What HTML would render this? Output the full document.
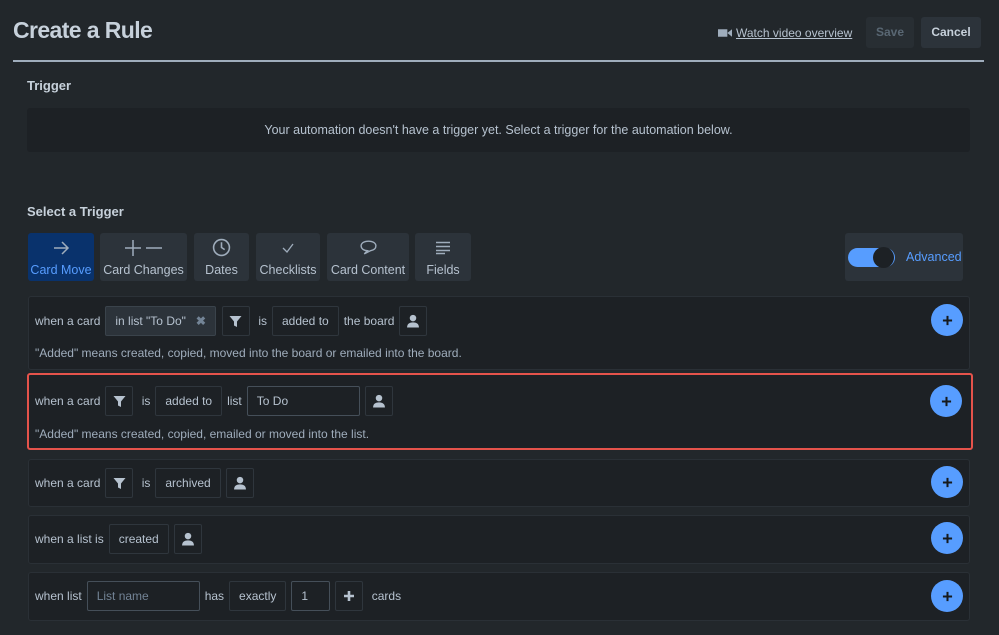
<!DOCTYPE html>
<html><head><meta charset="utf-8"><style>
*{box-sizing:border-box;margin:0;padding:0}
body{width:999px;height:635px;background:#22272b;color:#b6c2cf;font-family:"Liberation Sans",sans-serif;font-size:12px;position:relative;overflow:hidden}
.a{position:absolute}
.title{left:13px;top:17px;font-size:23px;font-weight:bold;color:#c7d1db;letter-spacing:-0.6px}
.hr{left:13px;top:60px;width:971px;height:2px;background:#9fadbc}
.h{font-weight:bold;font-size:13px;color:#c7d1db}
.msg{left:27px;top:108px;width:943px;height:44px;background:#1d2125;border-radius:3px;text-align:center;line-height:44px;color:#b6c2cf;font-size:12.5px}
.tab{top:233px;height:48px;background:#2c333a;border-radius:3px;text-align:center;color:#b6c2cf;font-size:12.5px}
.tab .ic{height:26px;display:flex;align-items:center;justify-content:center;padding-top:3px}
.tab .lb{margin-top:4px}
.card{left:28px;width:942px;background:#1d2125;border-radius:3px;border:1px solid #2a3036}
.row{position:absolute;left:6px;display:flex;align-items:center;gap:5px;height:30px;color:#b6c2cf;white-space:nowrap}
.b{height:30px;border:1px solid #2f363d;border-radius:2px;display:flex;align-items:center;padding:0 9px;background:#1d2125}
.sq{width:28px;justify-content:center;padding:0}
.note{position:absolute;left:6px;color:#9fadbc;font-size:12px}
.plus{position:absolute;right:6px;width:32px;height:32px;border-radius:50%;background:#579dff;display:flex;align-items:center;justify-content:center}
</style></head><body>
<div class="a title">Create a Rule</div>
<div class="a" style="left:718px;top:26px;color:#b6c2cf;font-size:12px;display:flex;align-items:center;gap:4px"><svg width="14" height="10" viewBox="0 0 15 10"><rect x="0" y="1" width="10" height="8" fill="#9fadbc"/><path d="M10 5 L15 1 V9 Z" fill="#9fadbc"/></svg><span style="text-decoration:underline">Watch video overview</span></div>
<div class="a" style="left:866px;top:17px;width:48px;height:31px;background:#282e33;border-radius:3px;color:#596773;font-weight:bold;line-height:31px;text-align:center">Save</div>
<div class="a" style="left:921px;top:17px;width:60px;height:31px;background:#2c333a;border-radius:3px;color:#c7d1db;font-weight:bold;line-height:31px;text-align:center">Cancel</div>
<div class="a hr"></div>
<div class="a h" style="left:27px;top:78px">Trigger</div>
<div class="a msg">Your automation doesn't have a trigger yet. Select a trigger for the automation below.</div>
<div class="a h" style="left:27px;top:204px">Select a Trigger</div>

<div class="a tab" style="left:28px;width:66px;background:#09326c;color:#579dff"><div class="ic"><svg width="18" height="16" viewBox="0 0 18 16"><path d="M2 8H16M10 2L16 8L10 14" stroke="#9fadbc" stroke-width="1.5" fill="none"/></svg></div><div class="lb">Card Move</div></div>
<div class="a tab" style="left:100px;width:87px"><div class="ic"><svg width="40" height="18" viewBox="0 0 40 18"><path d="M1 9H17M9 1V17M22 9H38" stroke="#9fadbc" stroke-width="1.5"/></svg></div><div class="lb">Card Changes</div></div>
<div class="a tab" style="left:194px;width:55px"><div class="ic"><svg width="19" height="19" viewBox="0 0 18 18"><circle cx="9" cy="9" r="7.5" stroke="#9fadbc" stroke-width="1.5" fill="none"/><path d="M9 4V9L12 11" stroke="#9fadbc" stroke-width="1.5" fill="none"/></svg></div><div class="lb">Dates</div></div>
<div class="a tab" style="left:256px;width:64px"><div class="ic"><svg width="14" height="12" viewBox="0 0 14 12"><path d="M2 6L6 10L12 2" stroke="#9fadbc" stroke-width="1.3" fill="none"/></svg></div><div class="lb">Checklists</div></div>
<div class="a tab" style="left:327px;width:82px"><div class="ic"><svg width="19" height="17" viewBox="0 0 18 16"><path d="M9 2C4.5 2 2 4 2 6.5S4.5 11 8 11L5 14L11 11C14 10.5 16 9 16 6.5S13.5 2 9 2Z" stroke="#9fadbc" stroke-width="1.3" fill="none"/></svg></div><div class="lb">Card Content</div></div>
<div class="a tab" style="left:415px;width:56px"><div class="ic"><svg width="16" height="15" viewBox="0 0 16 14"><path d="M1 2H15M1 6H15M1 10H15M1 13H10" stroke="#9fadbc" stroke-width="1.4"/></svg></div><div class="lb">Fields</div></div>

<div class="a" style="left:845px;top:233px;width:118px;height:48px;background:#2c333a;border-radius:3px">
<div class="a" style="left:3px;top:15px;width:47px;height:19px;border-radius:10px;background:#579dff"></div>
<div class="a" style="left:28px;top:14px;width:21px;height:21px;border-radius:50%;background:#1d2125"></div>
<div class="a" style="left:61px;top:17px;color:#579dff;font-size:12.5px">Advanced</div>
</div>

<div class="a card" style="top:296px;height:74px">
<div class="row" style="top:9px"><span>when a card</span><span class="b" style="background:#2c333a;border-color:#3a434b;padding:0 9px">in list "To Do"&nbsp;&nbsp;&nbsp;<b style="color:#738496">✖</b></span><span class="b sq" style="margin-left:1px">F</span><span>&nbsp;is</span><span class="b">added to</span><span>the board</span><span class="b sq">U</span></div>
<div class="note" style="top:49px">"Added" means created, copied, moved into the board or emailed into the board.</div>
<div class="plus" style="top:7px"></div>
</div>
<div class="a card" style="top:373px;height:77px;left:27px;width:946px;border:2px solid #e5534b">
<div class="row" style="top:11px"><span>when a card</span><span class="b sq">F</span><span>&nbsp;is</span><span class="b">added to</span><span>list</span><span class="b" style="width:113px;border-color:#454f59">To Do</span><span class="b sq">U</span></div>
<div class="note" style="top:52px">"Added" means created, copied, emailed or moved into the list.</div>
<div class="plus" style="top:10px;right:9px"></div>
</div>
<div class="a card" style="top:459px;height:48px">
<div class="row" style="top:8px"><span>when a card</span><span class="b sq">F</span><span>&nbsp;is</span><span class="b">archived</span><span class="b sq">U</span></div>
<div class="plus" style="top:6px"></div>
</div>
<div class="a card" style="top:515px;height:49px">
<div class="row" style="top:8px"><span>when a list is</span><span class="b">created</span><span class="b sq">U</span></div>
<div class="plus" style="top:6px"></div>
</div>
<div class="a card" style="top:572px;height:49px">
<div class="row" style="top:8px"><span>when list</span><span class="b" style="width:113px;border-color:#454f59;color:#738496">List name</span><span>has</span><span class="b">exactly</span><span class="b" style="width:39px;border-color:#454f59">1</span><span class="b sq">P</span><span>&nbsp;cards</span></div>
<div class="plus" style="top:7px"></div>
</div>

<script>
var F='<svg width="13" height="13" viewBox="0 0 13 13"><path d="M0.5 1H12.5L8 6.5V12L5 10.5V6.5Z" fill="#b6c2cf"/></svg>';
var U='<svg width="14" height="14" viewBox="0 0 13 13"><circle cx="6.5" cy="3.8" r="3" fill="#b6c2cf"/><path d="M1 12.5C1 9 3.5 7.8 6.5 7.8S12 9 12 12.5Z" fill="#b6c2cf"/></svg>';
var P='<svg width="12" height="12" viewBox="0 0 12 12"><path d="M6 1V11M1 6H11" stroke="#b6c2cf" stroke-width="2.6"/></svg>';
var PL='<svg width="11" height="11" viewBox="0 0 12 12"><path d="M6 1V11M1 6H11" stroke="#161a1d" stroke-width="2.2"/></svg>';
document.querySelectorAll('.sq').forEach(function(e){var t=e.textContent;e.innerHTML=t=='F'?F:t=='U'?U:P;});
document.querySelectorAll('.plus').forEach(function(e){e.innerHTML=PL;});
</script>
</body></html>
